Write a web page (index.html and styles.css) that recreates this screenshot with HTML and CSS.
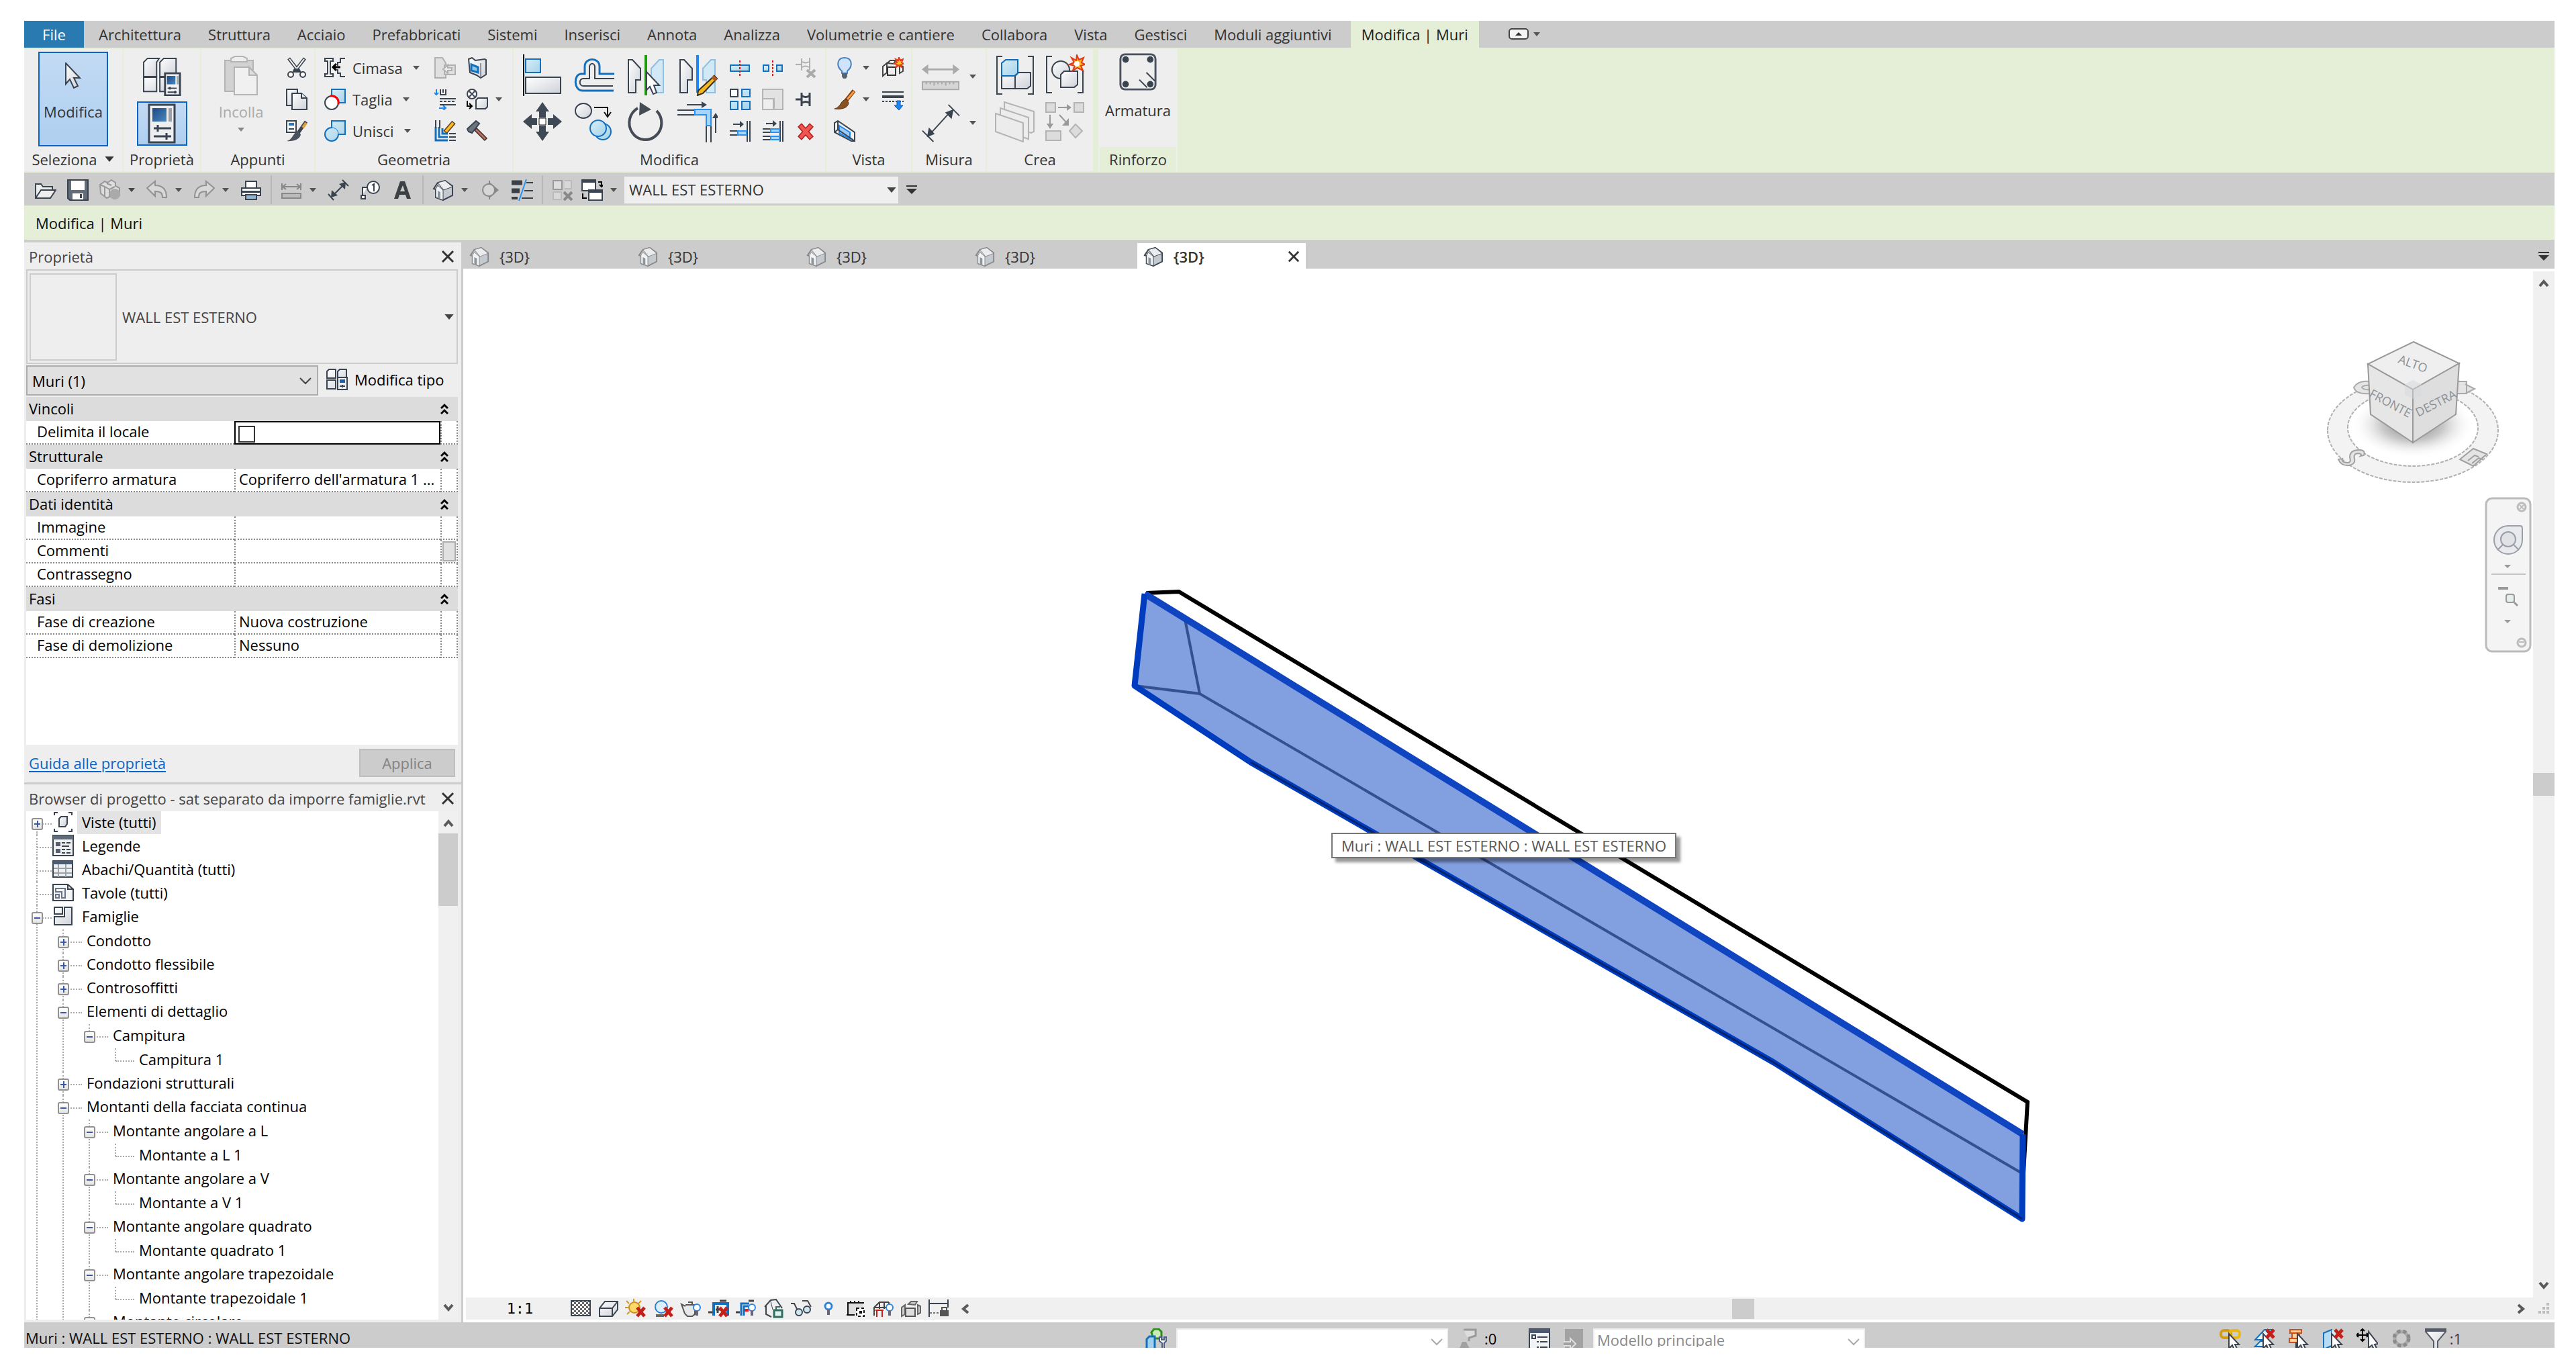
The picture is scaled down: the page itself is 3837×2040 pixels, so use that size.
FILE: index.html
```
<!DOCTYPE html>
<html lang="it">
<head>
<meta charset="utf-8">
<title>Modifica | Muri</title>
<link rel="stylesheet" href="styles.css">
</head>
<body>
<svg class="defs" aria-hidden="true">
<defs>
<linearGradient id="metal" x1="0" y1="0" x2="1" y2="1"><stop offset="0" stop-color="#fff"/><stop offset="1" stop-color="#cdd1d8"/></linearGradient>
<linearGradient id="sky" x1="0" y1="0" x2="1" y2="1"><stop offset="0" stop-color="#d8edf7"/><stop offset="1" stop-color="#a5d3ea"/></linearGradient>
<linearGradient id="navy" x1="0" y1="0" x2="1" y2="1"><stop offset="0" stop-color="#1a4a86"/><stop offset="1" stop-color="#4c86bd"/></linearGradient>
<radialGradient id="shade"><stop offset="0" stop-color="#777"/><stop offset=".5" stop-color="#bbb" stop-opacity=".8"/><stop offset="1" stop-color="#fff" stop-opacity="0"/></radialGradient>
</defs>
<symbol id="down" viewBox="0 0 12 8"><path d="M1 1h10L6 7z" fill="currentColor"/></symbol>
<symbol id="overflow" viewBox="0 0 16 16"><path d="M0 1h16v2H0zM0 6h16L8 14z" fill="currentColor"/></symbol>
<symbol id="chev" viewBox="0 0 18 12"><path d="M1 2l8 8 8-8" fill="none" stroke="currentColor" stroke-width="2"/></symbol>
<symbol id="chevb" viewBox="0 0 16 14"><path d="M2 11l6-7 6 7" fill="none" stroke="#5a5a5a" stroke-width="4"/></symbol>
<symbol id="x" viewBox="0 0 20 20"><path d="M2 2l16 16M18 2L2 18" stroke="#333" stroke-width="3"/></symbol>
<symbol id="dblup" viewBox="0 0 12 18"><path d="M1 8l5-5 5 5M1 16l5-5 5 5" fill="none" stroke="#000" stroke-width="3"/></symbol>
<symbol id="cursor" viewBox="0 0 24 40"><path d="M1 1v31l6-7 6 13 6-3-6-12h9z" fill="url(#metal)" stroke="#3a4350" stroke-width="2"/></symbol>
<symbol id="typeprops" viewBox="0 0 60 60"><g fill="url(#metal)" stroke="#3a4350" stroke-width="2"><path d="M2 8l6-6h18l-4 6v22H2z"/><path d="M27 8l6-6h19v24l-4 4H27z"/><path d="M2 31h20v22H2zM27 31h20v22H27z"/></g><path d="M35 25h23v34H35z" fill="#f2f3f5" stroke="#3a4350" stroke-width="3"/><path d="M38 29h13v13H38z" fill="url(#navy)"/><path d="M53 29h3v13h-3z" fill="#9aa"/><path d="M39 48h14M39 54h14" stroke="#3a4350" stroke-width="2"/><path d="M41 46h3v4h-3zM49 52h3v4h-3z" fill="#3a4350"/></symbol>
<symbol id="edittype" viewBox="0 0 32 32"><path d="M1 4l3-3h10v13H1zM17 4l3-3h10v13H17zM1 17h13v13H1z" fill="url(#metal)" stroke="#3a4350" stroke-width="2"/><path d="M17 13h14v18H17z" fill="#f2f3f5" stroke="#3a4350" stroke-width="2"/><path d="M20 16h8v5h-8z" fill="#1c5fae"/><path d="M20 26h8M24 24v4" stroke="#3a4350" stroke-width="2"/></symbol>
<symbol id="props" viewBox="0 0 42 60"><path d="M2 2h38v56H2z" fill="#eceef0" stroke="#3a4350" stroke-width="3"/><path d="M7 7h21v20H7z" fill="url(#navy)"/><path d="M31 7h5v20h-5z" fill="#9ca0a8"/><path d="M9 37h26M9 49h26M15 32v10M28 44v10" stroke="#3a4350" stroke-width="3"/></symbol>
<symbol id="paste" viewBox="0 0 50 60"><g stroke="#b4b4b4" stroke-width="2"><path d="M1 7h42v46H1z" fill="#d2d2d2"/><path d="M10 4l6-3h12l6 3v5H10z" fill="#eee"/><path d="M15 17h22l12 12v29H15z" fill="#f0f0f0"/><path d="M37 17v12h12z" fill="#ddd"/></g></symbol>
<symbol id="cut" viewBox="0 0 32 32"><path d="M4 2l15 19M28 2L13 21" stroke="#3a4350" stroke-width="5"/><path d="M5 3l13 17M27 3L14 20" stroke="#fff" stroke-width="2"/><path d="M12 17h8l3 6H9z" fill="#3a4350"/><circle cx="7" cy="26" r="4" fill="#fff" stroke="#3a4350" stroke-width="2"/><circle cx="25" cy="26" r="4" fill="#fff" stroke="#3a4350" stroke-width="2"/></symbol>
<symbol id="copy" viewBox="0 0 32 32"><g fill="url(#metal)" stroke="#3a4350" stroke-width="2"><path d="M1 1h16v24H1z"/><path d="M9 7h14l8 7v17H9z"/><path d="M23 7v7h8"/></g></symbol>
<symbol id="match" viewBox="0 0 32 32"><path d="M1 1h14v17H1z" fill="#fff" stroke="#3a4350" stroke-width="2"/><path d="M4 4h8v4H4z" fill="#2a78c0"/><path d="M4 13h8" stroke="#3a4350" stroke-width="2"/><path d="M30 2L18 19" stroke="#3a4350" stroke-width="5"/><path d="M30 4L25 11" stroke="#e0a23c" stroke-width="4"/><path d="M19 17c-9 0-8 12-18 14 9 1 20-2 21-10z" fill="#4a525e"/></symbol>
<symbol id="cope" viewBox="0 0 32 32"><path d="M1 2h12v4H9v19h4v4H1v-4h4V6H1z" fill="#fff" stroke="#3a4350" stroke-width="2"/><path d="M31 2h-7v6h-4v5M31 29h-7v-5h-4v-6" fill="none" stroke="#3a4350" stroke-width="2"/><path d="M24 15H13m5-5l-5 5 5 5" fill="none" stroke="#000" stroke-width="3"/></symbol>
<symbol id="cutg" viewBox="0 0 32 32"><path d="M11 1h20v20H20c0-6-4-10-9-10z" fill="url(#sky)" stroke="#1470bd" stroke-width="2"/><circle cx="11" cy="21" r="10" fill="#fff" stroke="#3a4350" stroke-width="2"/><path d="M9 11a10 10 0 0 1 12 12" fill="none" stroke="#f00" stroke-width="3"/></symbol>
<symbol id="join" viewBox="0 0 32 32"><path d="M11 1h20v20H21a10 10 0 1 1-10-10z" fill="url(#sky)" stroke="#1470bd" stroke-width="2"/><path d="M11 11c6 0 10 4 10 10" stroke="#1470bd" fill="none"/></symbol>
<symbol id="splitf" viewBox="0 0 32 32"><g fill="#e0e0e0" stroke="#b0b0b0" stroke-width="2"><path d="M1 1h11l5 8v22H1z"/><path d="M15 12h16v14H15z"/><path d="M26 16h-6v-4l-7 6 7 6v-4h6z" fill="#eee"/></g></symbol>
<symbol id="paint" viewBox="0 0 32 32"><path d="M3 3l5-2 5 4 14-2 2 1v22l-8 5-6-4-10-4z" fill="url(#metal)" stroke="#3a4350" stroke-width="2"/><path d="M21 9v20" stroke="#3a4350"/><path d="M7 11l10 4v8l-10-3z" fill="#8cc4ec" stroke="#1470bd" stroke-width="3"/></symbol>
<symbol id="wallj" viewBox="0 0 32 32"><path d="M3 1v8m-3-3l3 3 3-3M7 29h10m-4-4l4 4-4 3" stroke="#1e86f0" fill="none" stroke-width="2"/><path d="M9 1v8h8V1M13 1v5M8 15h24M8 24h24" fill="none" stroke="#3a4350" stroke-width="2"/><path d="M8 19h24" stroke="#3a4350" stroke-width="2" stroke-dasharray="4 2"/></symbol>
<symbol id="swap" viewBox="0 0 32 32"><circle cx="8" cy="8" r="7" fill="#fff" stroke="#3a4350" stroke-width="2"/><path d="M4 4l8 8M12 4l-8 8" stroke="#3a4350" stroke-width="2"/><path d="M1 18v8h6m-3-4l4 4-4 4" fill="none" stroke="#000" stroke-width="2"/><path d="M14 17l3-3h14v13l-3 3H14z" fill="url(#metal)" stroke="#3a4350" stroke-width="2"/></symbol>
<symbol id="wallpen" viewBox="0 0 32 32"><path d="M2 10v20h18M7 10v15h13M12 12v8h8" stroke="#1470bd" fill="none" stroke-width="3"/><path d="M2 0v12M8 0v12M22 20h10M22 25h10M22 30h10" stroke="#3a4350" stroke-width="2"/><path d="M29 3L16 18" stroke="#5a4020" stroke-width="7"/><path d="M28 4L17 17" stroke="#ffb91e" stroke-width="4"/></symbol>
<symbol id="hammer" viewBox="0 0 32 32"><path d="M12 12l17 17" stroke="#3a2a2a" stroke-width="6"/><path d="M14 14l14 14" stroke="#b9705c" stroke-width="3"/><path d="M14 1l5 4-11 14-5-2-2-4z" fill="#6b7480" stroke="#3a4350" stroke-width="2"/></symbol>
<symbol id="align" viewBox="0 0 60 62"><path d="M2 0v62" stroke="#000" stroke-width="2"/><path d="M5 7h22v20H5z" fill="url(#sky)" stroke="#1470bd" stroke-width="2"/><path d="M5 34h52v24H5z" fill="url(#metal)" stroke="#3a4350" stroke-width="2"/></symbol>
<symbol id="offset" viewBox="0 0 60 62"><path d="M60 29H38V18c0-14-22-14-22 0v11h-5c-12 0-12 25 2 25h46" fill="none" stroke="#1470bd" stroke-width="3"/><path d="M60 36H31V19c0-7-8-7-8 0v17h-9c-7 0-7 11 0 11h44" fill="none" stroke="#3a4350" stroke-width="2"/></symbol>
<symbol id="mirror" viewBox="0 0 60 62"><path d="M4 8h6l12 13v17h-7v19H4z" fill="url(#metal)" stroke="#3a4350" stroke-width="2"/><path d="M56 8h-6L38 21v17h5v19h13z" fill="#d3e8f5" stroke="#8fbfe3" stroke-width="2"/></symbol>
<symbol id="mirrorp" viewBox="0 0 60 62"><use href="#mirror"/><path d="M30 1v60" stroke="#1d9a0c" stroke-width="4"/><path d="M31 26v27l5-5 5 11 5-2-4-11h8z" fill="#fff" stroke="#3a4350" stroke-width="2"/></symbol>
<symbol id="mirrord" viewBox="0 0 60 62"><use href="#mirror"/><path d="M30 1v56" stroke="#1e86f0" stroke-width="4"/><path d="M55 32l4 4-21 22-8 3 1-7z" fill="#f5b71c" stroke="#3a3020" stroke-width="2"/><path d="M52 33l6 5" stroke="#a85820" stroke-width="5"/></symbol>
<symbol id="move" viewBox="0 0 60 62"><path d="M30 2l10 14h-5v9H25v-9h-5zM30 60l10-14h-5v-9H25v9h-5zM1 31l13-11v6h8v10h-8v6zM59 31L46 20v6h-8v10h8v6z" fill="#3f4855"/><path d="M25 26h10v10H25z" fill="#fff" stroke="#222" stroke-width="1"/></symbol>
<symbol id="copyel" viewBox="0 0 60 62"><ellipse cx="14" cy="15" rx="12" ry="11" fill="url(#metal)" stroke="#3a4350" stroke-width="2"/><path d="M30 10h20v12m-5-5l5 7 5-7" fill="none" stroke="#111" stroke-width="2"/><circle cx="43" cy="46" r="12" fill="url(#sky)" stroke="#1470bd" stroke-width="2"/><circle cx="36" cy="41" r="12" fill="url(#sky)" stroke="#1470bd" stroke-width="2"/></symbol>
<symbol id="rotate" viewBox="0 0 60 62"><path d="M46 15a24 25 0 1 1-28-4" fill="none" stroke="#454c56" stroke-width="4"/><path d="M21 2l17 11-18 9z" fill="#454c56"/></symbol>
<symbol id="trim" viewBox="0 0 60 62"><path d="M14 6h24M57 48V24" stroke="#3a4350" stroke-width="2"/><path d="M36 1l8 5-8 5zM52 26l5-8 5 8z" fill="#3a4350"/><path d="M0 14h26M0 21h26M43 37v25M50 37v25" stroke="#3a4350" stroke-width="2"/><path d="M26 13h24v24h-7V21H26z" fill="#a9d4f5" stroke="#2a91f2" stroke-width="2"/></symbol>
<symbol id="split" viewBox="0 0 32 32"><path d="M2 12h28v9H2z" fill="url(#sky)" stroke="#1470bd" stroke-width="2"/><path d="M16 5v23" stroke="#d21515" stroke-width="2" stroke-dasharray="3 2"/></symbol>
<symbol id="splitgap" viewBox="0 0 32 32"><path d="M2 12h8v9H2zM22 12h8v9h-8z" fill="url(#sky)" stroke="#1470bd" stroke-width="2"/><path d="M16 5v23" stroke="#d21515" stroke-width="2" stroke-dasharray="3 2"/></symbol>
<symbol id="pin" viewBox="0 0 32 32"><path d="M1 16h8M10 6v20M11 11q5 3 10 0M11 21q5-3 10 0M22 6v20" fill="none" stroke="currentColor" stroke-width="3"/></symbol>
<symbol id="unpin" viewBox="0 0 32 32"><path d="M1 11h8M10 2v18M11 7q5 3 10 0M11 15q5-3 10 0M22 1v18" fill="none" stroke="#b0b0b0" stroke-width="2"/><path d="M18 19l12 11M30 19L18 30" stroke="#aaa" stroke-width="4"/></symbol>
<symbol id="array" viewBox="0 0 32 32"><path d="M2 1h11v11H2z" fill="#fff" stroke="#3a4350" stroke-width="2"/><path d="M19 1h12v11H19zM2 19h11v12H2zM19 19h12v12H19z" fill="url(#sky)" stroke="#1470bd" stroke-width="2"/></symbol>
<symbol id="scale" viewBox="0 0 32 32"><path d="M1 1h30v30H18V15H1z" fill="#e2e2e2" stroke="#b5b5b5" stroke-width="2"/><path d="M1 15h16v16H1z" fill="#eee" stroke="#b5b5b5" stroke-width="2"/></symbol>
<symbol id="trims" viewBox="0 0 32 32"><path d="M6 6h12M1 16h12M1 22h12M27 1v31M31 1v31" stroke="#3a4350" stroke-width="2"/><path d="M16 1l6 5-6 5z" fill="#3a4350"/><path d="M13 16h13v6H13z" fill="#a9d4f5" stroke="#2a91f2" stroke-width="2"/></symbol>
<symbol id="trimm" viewBox="0 0 32 32"><path d="M6 5h12M1 13h12M1 18h12M1 24h12M1 29h12M27 1v31M31 1v31" stroke="#3a4350" stroke-width="2"/><path d="M16 0l6 5-6 5z" fill="#3a4350"/><path d="M13 13h13v5H13zM13 24h13v5H13z" fill="#a9d4f5" stroke="#2a91f2" stroke-width="2"/></symbol>
<symbol id="del" viewBox="0 0 32 32"><path d="M7 7l18 20M25 7L7 27" stroke="#b01c1c" stroke-width="8"/><path d="M8 8l16 18M24 8L8 26" stroke="#f0554f" stroke-width="5"/></symbol>
<symbol id="bulb" viewBox="0 0 32 32"><path d="M12 21C2 12 6 1 16 1s14 11 4 20v3h-8z" fill="#cfe4fb" stroke="#4a7fc0" stroke-width="2"/><path d="M12 24h8v5l-2 3h-4l-2-3z" fill="#5a6470"/></symbol>
<symbol id="dispbox" viewBox="0 0 32 32"><path d="M1 14l6-5v14l-6 5zM31 14l-5-3v13l5-3zM8 9l4-4h8l-3 5z" fill="#fff" stroke="#444" stroke-width="2"/><path d="M8 15h12v12H8z" fill="#eee" stroke="#333" stroke-width="2"/><path d="M25 0l2 5 4-2-2 5 3 2-4 1 1 4-4-3-4 3 1-4-4-1 4-2-2-5 4 2z" fill="#ffc21c" stroke="#e0401a" stroke-width="2"/></symbol>
<symbol id="brush" viewBox="0 0 32 32"><path d="M30 3L18 18" stroke="#7a3c10" stroke-width="6"/><path d="M30 4L20 16" stroke="#ff9a3c" stroke-width="3"/><path d="M19 16c-9 0-8 12-18 14 9 1 20 0 21-9z" fill="#8a5220" stroke="#5a3210"/></symbol>
<symbol id="lwt" viewBox="0 0 32 32"><path d="M0 5h32" stroke="#3a4350" stroke-width="2"/><path d="M0 12h32" stroke="#3a4350" stroke-width="4"/><path d="M0 19h32" stroke="#3a4350" stroke-width="2" stroke-dasharray="3 2"/><path d="M22 18h5v7h4l-6 7-7-7h4z" fill="#1e86f0" stroke="#0a5ab4"/></symbol>
<symbol id="selbox" viewBox="0 0 32 32"><path d="M1 4l5-3 25 17v13h-5L1 18z" fill="#f2f2f2" stroke="#3a4350" stroke-width="2"/><path d="M8 8l16 10v10L8 19z" fill="#9ccbfa" stroke="#1e86f0" stroke-width="2"/><path d="M1 18l5-4 25 17M6 1v13" fill="none" stroke="#3a4350" stroke-width="2"/></symbol>
<symbol id="ruler" viewBox="0 0 60 44"><path d="M8 11h44" stroke="#aaa" stroke-width="3"/><path d="M1 11l10-8v16zM59 11L49 3v16z" fill="#aaa"/><path d="M2 30h56v12H2z" fill="#d6d6d6" stroke="#aaa" stroke-width="2"/><path d="M8 30v4m6-4v4m6-4v6m6-6v4m6-4v4m6-4v6m6-6v4m6-4v4" stroke="#aaa" stroke-width="2"/></symbol>
<symbol id="dim" viewBox="0 0 60 60"><path d="M15 46L44 14M2 42l17 17M42 2l17 17" stroke="#3a4350" stroke-width="2"/><path d="M9 52l3-15 9 10zM50 9l-3 15-10-10z" fill="#3a4350"/></symbol>
<symbol id="assembly" viewBox="0 0 60 60"><path d="M11 2H3v56h8M49 2h8v56h-8" fill="none" stroke="#3a4350" stroke-width="2"/><path d="M10 31h20v19H10zM30 31l5-5h18v20l-5 4H30z" fill="url(#metal)" stroke="#3a4350" stroke-width="2"/><path d="M10 12l6-5h18v20l-5 4H10z" fill="url(#sky)" stroke="#0a6ac0" stroke-width="2"/></symbol>
<symbol id="group" viewBox="0 0 60 60"><path d="M11 2H3v54h8M57 22v34h-8" fill="none" stroke="#3a4350" stroke-width="2"/><circle cx="24" cy="22" r="13" fill="url(#metal)" stroke="#3a4350" stroke-width="2"/><path d="M24 29l5-5h20v20l-5 4H24z" fill="url(#metal)" stroke="#3a4350" stroke-width="2"/><path d="M48 0l3 7 7-3-3 7 5 3-6 2 3 7-8-4-7 4 3-7-8-2 7-3-4-7 7 4z" fill="#ffb21c" stroke="#e2381a" stroke-width="2"/><circle cx="48" cy="13" r="4" fill="#fff"/></symbol>
<symbol id="parts" viewBox="0 0 60 60"><g fill="#ececec" stroke="#b4b4b4" stroke-width="2"><path d="M14 1l44 14v30l-4 2-40-14z"/><path d="M8 10l42 14v32L8 42z"/><path d="M1 18l41 14v28L1 45z"/></g></symbol>
<symbol id="partsx" viewBox="0 0 60 60"><g fill="#dcdcdc" stroke="#b4b4b4" stroke-width="2"><path d="M2 2h14v14H2zM44 2h14v14H44zM2 44h22v14H2zM46 34l10 10-10 10-9-10z"/></g><path d="M20 9h14M8 20v14M22 20l10 11" stroke="#999" stroke-width="2"/><path d="M33 4l7 5-7 5zM3 33h10l-5 8zM36 25v11H26z" fill="#999"/></symbol>
<symbol id="rebar" viewBox="0 0 60 60"><rect x="3" y="3" width="54" height="54" rx="7" fill="none" stroke="#4a525e" stroke-width="3"/><circle cx="11" cy="11" r="5" fill="#3a4350"/><circle cx="49" cy="11" r="5" fill="#3a4350"/><circle cx="11" cy="49" r="5" fill="#3a4350"/><circle cx="49" cy="49" r="5" fill="#3a4350"/><path d="M43 31l13 13M32 42l12 12" stroke="#3a4350" stroke-width="2"/></symbol>
<symbol id="open" viewBox="0 0 32 32"><path d="M1 28V7h8l3 4h14v5M1 28l8-12h22l-8 12z" fill="#eee" stroke="#3a4350" stroke-width="2"/></symbol>
<symbol id="save" viewBox="0 0 32 32"><path d="M1 1h30v30H4l-3-3z" fill="#626b78" stroke="#3a4350" stroke-width="2"/><path d="M6 2h20v14H6z" fill="#fff"/><path d="M8 21h16v9H8z" fill="#fff"/><path d="M19 22h3v6h-3z" fill="#3a4350"/></symbol>
<symbol id="sync" viewBox="0 0 32 32"><path d="M1 8l7-5 4 2 6-4 6 4v5l6 3v11l-8 5-5-4-6 3-9-7z" fill="#ddd" stroke="#999" stroke-width="2"/><path d="M8 11l7 4v12M15 15l8-4M1 8l7 3v14M11 6l7 3" stroke="#999" fill="none" stroke-width="2"/><circle cx="23" cy="22" r="8" fill="#aaa"/></symbol>
<symbol id="undo" viewBox="0 0 32 32"><path d="M1 13L13 3v6c12 0 17 6 17 18h-6c0-7-3-9-11-9v7z" fill="#d8d8d8" stroke="#929292" stroke-width="2"/></symbol>
<symbol id="redo" viewBox="0 0 32 32"><path d="M31 13L19 3v6C7 9 2 15 2 27h6c0-7 3-9 11-9v7z" fill="#d8d8d8" stroke="#929292" stroke-width="2"/></symbol>
<symbol id="print" viewBox="0 0 32 32"><path d="M8 3h16v11H8z" fill="#fff" stroke="#3a4350" stroke-width="2"/><path d="M2 13h28v11H2z" fill="#fff" stroke="#3a4350" stroke-width="2"/><path d="M1 17h30v3H1z" fill="#3a4350"/><path d="M8 23h16v7H8z" fill="#8fb8d6" stroke="#3a4350" stroke-width="2"/></symbol>
<symbol id="meas" viewBox="0 0 32 32"><path d="M3 11h26M2 6v10M30 6v10M8 7l-5 4 5 4M24 7l5 4-5 4" fill="none" stroke="#888" stroke-width="2"/><path d="M2 21h28v7H2z" fill="#bbb" stroke="#888" stroke-width="2"/></symbol>
<symbol id="adim" viewBox="0 0 32 32"><path d="M8 24L24 8M1 22l8 9M22 1l9 9" stroke="#3a4350" stroke-width="2"/><path d="M5 27l1-11 9 8zM27 4l-1 11-9-8z" fill="#3a4350"/></symbol>
<symbol id="tag" viewBox="0 0 32 32"><circle cx="20" cy="12" r="9" fill="#fff" stroke="#3a4350" stroke-width="2"/><path d="M18 9l3-2v11" fill="none" stroke="#3a4350" stroke-width="2"/><path d="M11 12H4v11M2 24h6v5H2z" fill="#fff" stroke="#3a4350" stroke-width="2"/></symbol>
<symbol id="atext" viewBox="0 0 32 32"><path d="M3 29L12 3h7l9 26h-6l-2-6H11l-2 6zM12 18h7l-3-9z" fill="#3c3f44"/></symbol>
<symbol id="house" viewBox="0 0 32 32"><path d="M2 14L8 5l11-3 11 8v14l-14 7-11-4V15z" fill="#c4c9d0" stroke="currentColor" stroke-width="2"/><path d="M8 5l11-3 11 9-13 5z" fill="#ececee" stroke="currentColor" stroke-width="1"/><path d="M5 14l3-5 8 7v15l-11-4z" fill="#f2f3f4" stroke="currentColor" stroke-width="1"/><path d="M8 17l4 2v10l-4-1z" fill="#8c949e"/></symbol>
<symbol id="section" viewBox="0 0 32 32"><path d="M15 2v28" stroke="#888" stroke-width="2"/><path d="M15 4l14 12-14 12z" fill="#888"/><circle cx="14" cy="16" r="9" fill="#d6d6d6" stroke="#888" stroke-width="2"/></symbol>
<symbol id="thin" viewBox="0 0 32 32"><path d="M0 5h16M0 17h12" stroke="#3a3f46" stroke-width="7"/><path d="M0 28h9" stroke="#3a3f46" stroke-width="4"/><path d="M22 5h10M19 17h13M15 28h17" stroke="#3a3f46" stroke-width="2"/><path d="M22 0L11 32" stroke="#2a91f2" stroke-width="2"/></symbol>
<symbol id="closeh" viewBox="0 0 32 32"><path d="M2 2h13v13H2z" fill="#ddd" stroke="#999" stroke-width="2"/><path d="M19 2h10v12H19M2 19h12v11H2z" fill="#d8d8d8" stroke="#bbb" stroke-width="2"/><path d="M18 19l12 12M30 19L18 31" stroke="#888" stroke-width="4"/></symbol>
<symbol id="switch" viewBox="0 0 32 32"><path d="M1 1h20v16H1zM11 16h20v15H11z" fill="#fff" stroke="#3a4350" stroke-width="2"/><path d="M1 1h20v4H1zM11 16h20v4H11z" fill="#3a4350"/><path d="M25 4h5v6m-3-2l3 3 3-3M2 21v7h6" fill="none" stroke="#000" stroke-width="2"/></symbol>
<symbol id="viewic" viewBox="0 0 32 32"><path d="M3 6V2h5M24 2h5v4M3 26v4h5M24 30h5v-4" fill="none" stroke="#3a4350" stroke-width="2"/><path d="M10 11l3-3h9v11l-3 4h-9z" fill="url(#metal)" stroke="#3a4350" stroke-width="2"/></symbol>
<symbol id="legend" viewBox="0 0 32 32"><path d="M1 1h30v30H1z" fill="#eef0f2" stroke="#3a4350" stroke-width="2"/><path d="M1 1h30v6H1z" fill="#5f6a7a"/><path d="M5 11h7v6H5zM5 21h7v6H5z" fill="#56606e"/><path d="M14 12h5m2 0h6M14 17h11M14 22h5m2 0h6M14 27h5m2 0h6" stroke="#3a4350" stroke-width="2"/></symbol>
<symbol id="sched" viewBox="0 0 32 32"><path d="M1 4h29v24H1z" fill="#eef0f2" stroke="#3a4350" stroke-width="2"/><path d="M1 4h29v5H1z" fill="#4b5a70"/><path d="M2 15h27M2 22h27M9 9v19M20 9v19" stroke="#9aa2ac" stroke-width="2"/></symbol>
<symbol id="sheet" viewBox="0 0 32 32"><path d="M1 4h22l8 7v17H1z" fill="#f4f5f7" stroke="#3a4350" stroke-width="2"/><path d="M23 4v7h8" fill="none" stroke="#3a4350" stroke-width="2"/><path d="M5 10h14v14h-5V15H5zM5 19h5v5H5z" fill="none" stroke="#687586" stroke-width="2"/></symbol>
<symbol id="fam" viewBox="0 0 32 32"><path d="M3 3h12v10H3zM18 3h11v26H3V17h15z" fill="url(#metal)" stroke="#3a4350" stroke-width="2"/></symbol>
<symbol id="v-checker" viewBox="0 0 32 32"><pattern id="chk" width="6" height="6" patternUnits="userSpaceOnUse"><path d="M0 0h3v3H0zM3 3h3v3H3z" fill="#666"/></pattern><path d="M2 4h28v22H2z" fill="#fff"/><path d="M2 4h28v22H2z" fill="url(#chk)" stroke="#3a4350" stroke-width="2"/></symbol>
<symbol id="v-cube" viewBox="0 0 32 32"><path d="M3 15l8-10h19v12l-8 10H3zM3 15h19v12M22 15l8-10" fill="url(#metal)" stroke="#3a4350" stroke-width="2"/></symbol>
<symbol id="v-redx" viewBox="0 0 32 32"><path d="M18 14l11 13M29 14L18 27" stroke="#c4201a" stroke-width="5"/></symbol>
<symbol id="v-bulb" viewBox="0 0 32 32"><circle cx="25" cy="14" r="5" fill="#fff" stroke="#2a85e0" stroke-width="2"/><path d="M23 19h4v7h-4z" fill="#667"/></symbol>
<symbol id="v-sun" viewBox="0 0 32 32"><path d="M13 1v4M2 4l4 4M24 4l-4 4M0 14h5M3 24l4-4" stroke="#d69a1e" stroke-width="2"/><circle cx="14" cy="14" r="8" fill="#ffd86a" stroke="#c8901a" stroke-width="2"/><use href="#v-redx"/></symbol>
<symbol id="v-shadow" viewBox="0 0 32 32"><path d="M5 24h12v4H5z" fill="#666"/><circle cx="13" cy="13" r="9" fill="#dcefff" stroke="#2a7fd0" stroke-width="2"/><use href="#v-redx"/></symbol>
<symbol id="v-pot" viewBox="0 0 32 32"><path d="M8 10h14v14l-4 3h-7l-4-4-5-14 6 3M12 6h6v4" fill="#e6e8ea" stroke="#555" stroke-width="2"/><use href="#v-bulb"/></symbol>
<symbol id="v-crop" viewBox="0 0 32 32"><path d="M9 26V8h21v18" fill="none" stroke="#1470bd" stroke-width="4"/><path d="M1 21h6M18 4h10M15 12v10M12 17h8" stroke="#444" stroke-width="3"/></symbol>
<symbol id="v-cropx" viewBox="0 0 32 32"><use href="#v-crop"/><use href="#v-redx"/></symbol>
<symbol id="v-cropb" viewBox="0 0 32 32"><path d="M9 26V8h12M13 26V12h7" fill="none" stroke="#1470bd" stroke-width="3"/><path d="M1 21h6M20 4h8" stroke="#444" stroke-width="3"/><path d="M14 18h6" stroke="#e02020" stroke-width="4"/><use href="#v-bulb"/></symbol>
<symbol id="v-lock" viewBox="0 0 32 32"><path d="M3 13L12 3l8-1 9 13M5 12v12l8 4" fill="#eee" stroke="#3a4350" stroke-width="2"/><path d="M12 5l3 12" stroke="#3a4350"/><path d="M17 18h12v10H17z" fill="#dff0ea" stroke="#2f6f62" stroke-width="3"/><path d="M20 18v-5h6" fill="none" stroke="#2f6f62" stroke-width="2"/></symbol>
<symbol id="v-glass" viewBox="0 0 32 32"><path d="M1 8h5l5 10M18 4h8l5 9" fill="none" stroke="#444" stroke-width="2"/><circle cx="13" cy="21" r="5" fill="#cfe8f0" stroke="#3a4350" stroke-width="2"/><circle cx="25" cy="17" r="5" fill="#cfe8f0" stroke="#3a4350" stroke-width="2"/></symbol>
<symbol id="v-bulb1" viewBox="0 0 32 32"><circle cx="16" cy="12" r="5" fill="#fff" stroke="#2a85e0" stroke-width="3"/><path d="M14 17h4v8h-4z" fill="#667"/></symbol>
<symbol id="v-temp" viewBox="0 0 32 32"><path d="M4 8h22v17H4z" fill="#ddd"/><path d="M3 7h25M4 7v19M2 25h12M8 4v4m6-4v4m6-4v4" stroke="#111" stroke-width="2"/><path d="M17 15h11v12H17z" fill="#fff" stroke="#111" stroke-width="2" stroke-dasharray="4 3"/><path d="M21 19h4v4h-4z" fill="#111"/></symbol>
<symbol id="v-anal" viewBox="0 0 32 32"><path d="M2 26V14l8-8h14M10 6v10M17 6v10M2 14h18M24 6v8" fill="none" stroke="#444" stroke-width="2"/><path d="M4 18h12M6 18v10M14 18v10" stroke="#c4201a" stroke-width="2" fill="none"/><use href="#v-bulb"/></symbol>
<symbol id="v-disp" viewBox="0 0 32 32"><path d="M2 14l5-4v14l-5 3zM30 12l-4-2v14l4-2zM12 9l4-4h9l-3 5z" fill="#ccc" stroke="#666" stroke-width="2"/><path d="M8 15h14v12H8z" fill="#ddd" stroke="#555" stroke-width="2"/></symbol>
<symbol id="v-cons" viewBox="0 0 32 32"><path d="M2 2v26M30 2v12M2 8h28" stroke="#3a4350" stroke-width="2"/><path d="M3 22h14" stroke="#777" stroke-width="2" stroke-dasharray="3 2"/><path d="M18 18h13v9H18z" fill="#555"/><path d="M21 18v-4h7v4" fill="none" stroke="#555" stroke-width="2"/></symbol>
<symbol id="s-work" viewBox="0 0 32 32"><path d="M9 6l4-5h7l4 4v10H12z" fill="#c9ebb5" stroke="#2f8a1e" stroke-width="3"/><path d="M2 32V16l4-4h8v20z" fill="#9fd0ee" stroke="#1470bd" stroke-width="3"/><path d="M25 32V22l-4-3v-6h3v4h4v-4h3v6l-3 3v10z" fill="#fff" stroke="#4b5f85" stroke-width="2"/></symbol>
<symbol id="s-filt" viewBox="0 0 32 32"><path d="M9 2h18v9l-10 3v5" fill="#ddd" stroke="#9a9a9a" stroke-width="3"/><path d="M2 32l5-12h6l6 12z" fill="#a2a2a2"/></symbol>
<symbol id="s-opt" viewBox="0 0 32 32"><path d="M1 1h30v34H1z" fill="#f2f3f5" stroke="#3a4350" stroke-width="2"/><path d="M1 1h30v6H1z" fill="#4b5a70"/><path d="M5 10h5v5H5zM13 13h15M12 20h3m2 0h11M12 28h3m2 0h11" fill="none" stroke="#3a4350" stroke-width="2"/></symbol>
<symbol id="s-add" viewBox="0 0 32 32"><path d="M4 1h27v31H4z" fill="#a2a2a2"/><path d="M2 20h10v-5l8 8-8 8v-5H2" fill="#a2a2a2" stroke="#e0e0e0" stroke-width="2"/></symbol>
<symbol id="s-cur" viewBox="0 0 32 32"><path d="M14 8v22l5-5 4 9 4-2-4-8h6z" fill="#fff" stroke="#3a4350" stroke-width="2"/></symbol>
<symbol id="s-redx" viewBox="0 0 32 32"><path d="M19 2l11 12M30 2L19 14" stroke="#c4201a" stroke-width="5"/></symbol>
<symbol id="s-link" viewBox="0 0 32 32"><rect x="2" y="3" width="15" height="11" rx="5" fill="none" stroke="#d49c10" stroke-width="4"/><rect x="15" y="3" width="15" height="11" rx="5" fill="none" stroke="#e8b818" stroke-width="4"/><use href="#s-cur"/></symbol>
<symbol id="s-under" viewBox="0 0 32 32"><path d="M2 17L16 2h12L18 17zM2 27l8-8h14v8z" fill="#e4f3fb" stroke="#1470bd" stroke-width="2"/><use href="#s-cur"/><use href="#s-redx"/></symbol>
<symbol id="s-pin" viewBox="0 0 32 32"><path d="M3 2h17v5H3zM6 7h11v8H6zM2 15h19v6H2z" fill="#ffd0a0" stroke="#c8501a" stroke-width="2"/><path d="M12 21v11" stroke="#3a4350" stroke-width="2"/><use href="#s-cur"/></symbol>
<symbol id="s-face" viewBox="0 0 32 32"><path d="M2 7l12-5v24L2 31z" fill="#b5dcf2" stroke="#1470bd" stroke-width="2"/><path d="M14 3h6v10h-6z" fill="#d6ecf8"/><use href="#s-cur"/><use href="#s-redx"/></symbol>
<symbol id="s-drag" viewBox="0 0 32 32"><path d="M9 1v18M0 10h18M6 4l3-3 3 3M6 16l3 3 3-3M3 7l-3 3 3 3M15 7l3 3-3 3" fill="none" stroke="#000" stroke-width="2"/><path d="M18 5v24l5-4 4 8 4-2-4-7 5-1z" fill="#fff" stroke="#3a4350" stroke-width="2"/></symbol>
<symbol id="s-spin" viewBox="0 0 32 32"><circle cx="16" cy="15" r="10" fill="none" stroke="#aaa" stroke-width="5"/><circle cx="16" cy="15" r="11" fill="none" stroke="#8a8a8a" stroke-width="5" stroke-dasharray="5 4"/></symbol>
<symbol id="s-funnel" viewBox="0 0 32 32"><path d="M1 1h30v4L19 19v14h-6V19L1 5z" fill="url(#metal)" stroke="#555c66" stroke-width="2"/><path d="M2 2h28v3H2z" fill="#555c66"/></symbol>
</svg>

<div class="app">
  <nav class="menu" aria-label="Schede">
    <button class="file">File</button>
    <button>Architettura</button><button>Struttura</button><button>Acciaio</button><button>Prefabbricati</button><button>Sistemi</button><button>Inserisci</button><button>Annota</button><button>Analizza</button><button>Volumetrie e cantiere</button><button>Collabora</button><button>Vista</button><button>Gestisci</button><button>Moduli aggiuntivi</button><button class="current">Modifica | Muri</button>
    <button class="ribbon-toggle" aria-label="Riduci barra"><svg width="30" height="18" viewBox="0 0 30 18"><rect x="1" y="1" width="28" height="15" rx="4" fill="#f4f4f4" stroke="#444" stroke-width="2"/><path d="M10 11h10l-5-5z" fill="#333"/></svg><svg class="caret"><use href="#down"/></svg></button>
  </nav>

  <div class="ribbon">
    <section class="panel p-sel"><div class="body"><button class="big on"><svg width="24" height="40"><use href="#cursor"/></svg>Modifica</button></div><h2>Seleziona <svg class="tri"><use href="#down"/></svg></h2></section>
    <section class="panel p-prop"><div class="body"><button aria-label="Proprietà tipo"><svg width="58" height="58"><use href="#typeprops"/></svg></button><button class="on" aria-label="Proprietà"><svg width="42" height="60"><use href="#props"/></svg></button></div><h2>Proprietà</h2></section>
    <section class="panel p-clip"><div class="body"><button class="big off"><svg width="50" height="60"><use href="#paste"/></svg>Incolla<svg class="caret"><use href="#down"/></svg></button>
      <div class="col"><button aria-label="Taglia"><svg class="i"><use href="#cut"/></svg></button><button aria-label="Copia"><svg class="i"><use href="#copy"/></svg></button><button aria-label="Corrispondenza"><svg class="i"><use href="#match"/></svg></button></div></div><h2>Appunti</h2></section>
    <section class="panel p-geo"><div class="body">
      <div class="col wide"><button><svg class="i"><use href="#cope"/></svg>Cimasa<svg class="caret"><use href="#down"/></svg></button><button><svg class="i"><use href="#cutg"/></svg>Taglia<svg class="caret"><use href="#down"/></svg></button><button><svg class="i"><use href="#join"/></svg>Unisci<svg class="caret"><use href="#down"/></svg></button></div>
      <div class="col"><button aria-label="Dividi"><svg class="i"><use href="#splitf"/></svg></button><button aria-label="Unioni"><svg class="i"><use href="#wallj"/></svg></button><button aria-label="Profilo"><svg class="i"><use href="#wallpen"/></svg></button></div>
      <div class="col arrows"><button aria-label="Dipingi"><svg class="i"><use href="#paint"/></svg></button><button aria-label="Scambia"><svg class="i"><use href="#swap"/></svg><svg class="caret"><use href="#down"/></svg></button><button aria-label="Demolisci"><svg class="i"><use href="#hammer"/></svg></button></div>
    </div><h2>Geometria</h2></section>
    <section class="panel p-mod"><div class="body">
      <div class="large"><button aria-label="Allinea"><svg class="l"><use href="#align"/></svg></button><button aria-label="Offset"><svg class="l"><use href="#offset"/></svg></button><button aria-label="Specchia asse"><svg class="l"><use href="#mirrorp"/></svg></button><button aria-label="Specchia disegna"><svg class="l"><use href="#mirrord"/></svg></button><button aria-label="Sposta"><svg class="l"><use href="#move"/></svg></button><button aria-label="Copia elemento"><svg class="l"><use href="#copyel"/></svg></button><button aria-label="Ruota"><svg class="l"><use href="#rotate"/></svg></button><button aria-label="Estendi"><svg class="l"><use href="#trim"/></svg></button></div>
      <div class="col"><button aria-label="Dividi elemento"><svg class="i"><use href="#split"/></svg></button><button aria-label="Serie"><svg class="i"><use href="#array"/></svg></button><button aria-label="Taglia singolo"><svg class="i"><use href="#trims"/></svg></button></div>
      <div class="col"><button aria-label="Dividi con spazio"><svg class="i"><use href="#splitgap"/></svg></button><button aria-label="Scala"><svg class="i"><use href="#scale"/></svg></button><button aria-label="Taglia multiplo"><svg class="i"><use href="#trimm"/></svg></button></div>
      <div class="col"><button aria-label="Sblocca"><svg class="i"><use href="#unpin"/></svg></button><button aria-label="Blocca"><svg class="i"><use href="#pin"/></svg></button><button aria-label="Elimina"><svg class="i"><use href="#del"/></svg></button></div>
    </div><h2>Modifica</h2></section>
    <section class="panel p-view"><div class="body">
      <div class="col arrows"><button aria-label="Nascondi"><svg class="i"><use href="#bulb"/></svg><svg class="caret"><use href="#down"/></svg></button><button aria-label="Sostituisci grafica"><svg class="i"><use href="#brush"/></svg><svg class="caret"><use href="#down"/></svg></button><button aria-label="Casella di selezione"><svg class="i"><use href="#selbox"/></svg></button></div>
      <div class="col"><button aria-label="Sposta elementi"><svg class="i"><use href="#dispbox"/></svg></button><button aria-label="Spessore linea"><svg class="i"><use href="#lwt"/></svg></button></div>
    </div><h2>Vista</h2></section>
    <section class="panel p-meas"><div class="body"><button class="off" aria-label="Misura"><svg width="58" height="44"><use href="#ruler"/></svg><svg class="caret"><use href="#down"/></svg></button><button aria-label="Quota"><svg width="58" height="60"><use href="#dim"/></svg><svg class="caret"><use href="#down"/></svg></button></div><h2>Misura</h2></section>
    <section class="panel p-crea"><div class="body"><button aria-label="Assieme"><svg class="l"><use href="#assembly"/></svg></button><button aria-label="Gruppo"><svg class="l"><use href="#group"/></svg></button><button aria-label="Parti"><svg class="l"><use href="#parts"/></svg></button><button aria-label="Simile"><svg class="l"><use href="#partsx"/></svg></button></div><h2>Crea</h2></section>
    <section class="panel p-reb"><div class="body"><button class="big"><svg width="58" height="60"><use href="#rebar"/></svg>Armatura</button></div><h2>Rinforzo</h2></section>
  </div>

  <div class="qat">
    <button aria-label="Apri"><svg class="i"><use href="#open"/></svg></button>
    <button aria-label="Salva"><svg class="i"><use href="#save"/></svg></button>
    <button class="off" aria-label="Sincronizza"><svg class="i"><use href="#sync"/></svg><svg class="caret dark"><use href="#down"/></svg></button>
    <button class="off" aria-label="Annulla"><svg class="i"><use href="#undo"/></svg><svg class="caret"><use href="#down"/></svg></button>
    <button class="off" aria-label="Ripeti"><svg class="i"><use href="#redo"/></svg><svg class="caret"><use href="#down"/></svg></button>
    <button aria-label="Stampa"><svg class="i"><use href="#print"/></svg></button>
    <i class="sep"></i>
    <button aria-label="Misura"><svg class="i"><use href="#meas"/></svg><svg class="caret"><use href="#down"/></svg></button>
    <button aria-label="Quota allineata"><svg class="i"><use href="#adim"/></svg></button>
    <button aria-label="Etichetta"><svg class="i"><use href="#tag"/></svg></button>
    <button aria-label="Testo"><svg class="i"><use href="#atext"/></svg></button>
    <i class="sep"></i>
    <button aria-label="Vista 3D"><svg class="i"><use href="#house"/></svg><svg class="caret"><use href="#down"/></svg></button>
    <button aria-label="Sezione"><svg class="i"><use href="#section"/></svg></button>
    <button aria-label="Linee sottili"><svg class="i"><use href="#thin"/></svg></button>
    <i class="sep"></i>
    <button aria-label="Chiudi nascoste"><svg class="i"><use href="#closeh"/></svg></button>
    <button class="near" aria-label="Cambia finestra"><svg class="i"><use href="#switch"/></svg><svg class="caret"><use href="#down"/></svg></button>
    <label class="combo quick"><select aria-label="Tipo rapido"><option>WALL EST ESTERNO</option></select><svg width="16" height="12"><use href="#down"/></svg></label>
    <button class="near" aria-label="Personalizza"><svg width="16" height="16"><use href="#overflow"/></svg></button>
  </div>

  <div class="options">Modifica | Muri</div>

  <main class="work">
    <aside class="side">
      <section class="props">
        <header><h3>Proprietà</h3><button aria-label="Chiudi proprietà"><svg width="20" height="20"><use href="#x"/></svg></button></header>
        <button class="type"><span class="thumb"></span>WALL EST ESTERNO<svg width="16" height="12"><use href="#down"/></svg></button>
        <div class="filter"><label class="combo cat"><select aria-label="Categoria"><option>Muri (1)</option></select><svg width="18" height="12"><use href="#chev"/></svg></label><button class="edit"><svg class="i"><use href="#edittype"/></svg>Modifica tipo</button></div>
        <div class="grid">
          <table>
            <colgroup><col class="c-name"><col><col class="c-btn"></colgroup>
            <tbody>
            <tr class="cat-row"><th colspan="2">Vincoli</th><td><svg class="up"><use href="#dblup"/></svg></td></tr>
            <tr><th><label for="room">Delimita il locale</label></th><td class="active"><input type="checkbox" id="room"></td><td></td></tr>
            <tr class="cat-row"><th colspan="2">Strutturale</th><td><svg class="up"><use href="#dblup"/></svg></td></tr>
            <tr><th>Copriferro armatura</th><td>Copriferro dell'armatura 1 ...</td><td></td></tr>
            <tr class="cat-row"><th colspan="2">Dati identità</th><td><svg class="up"><use href="#dblup"/></svg></td></tr>
            <tr><th>Immagine</th><td></td><td></td></tr>
            <tr><th>Commenti</th><td></td><td><button class="assoc" aria-label="Associa"></button></td></tr>
            <tr><th>Contrassegno</th><td></td><td></td></tr>
            <tr class="cat-row"><th colspan="2">Fasi</th><td><svg class="up"><use href="#dblup"/></svg></td></tr>
            <tr><th>Fase di creazione</th><td>Nuova costruzione</td><td></td></tr>
            <tr><th>Fase di demolizione</th><td>Nessuno</td><td></td></tr>
            </tbody>
          </table>
        </div>
        <footer><a href="#guida">Guida alle proprietà</a><button disabled>Applica</button></footer>
      </section>
      <section class="browser">
        <header><h3>Browser di progetto - sat separato da imporre famiglie.rvt</h3><button aria-label="Chiudi browser"><svg width="20" height="20"><use href="#x"/></svg></button></header>
        <div class="treebox">
          <ul class="tree">
            <li><div class="row"><button class="ex plus" aria-label="Espandi"></button><svg class="i"><use href="#viewic"/></svg><span class="sel">Viste (tutti)</span></div></li>
            <li><div class="row"><svg class="i"><use href="#legend"/></svg><span>Legende</span></div></li>
            <li><div class="row"><svg class="i"><use href="#sched"/></svg><span>Abachi/Quantità (tutti)</span></div></li>
            <li><div class="row"><svg class="i"><use href="#sheet"/></svg><span>Tavole (tutti)</span></div></li>
            <li class="more"><div class="row"><button class="ex" aria-label="Comprimi"></button><svg class="i"><use href="#fam"/></svg><span>Famiglie</span></div>
              <ul>
                <li><div class="row"><button class="ex plus" aria-label="Espandi"></button><span>Condotto</span></div></li>
                <li><div class="row"><button class="ex plus" aria-label="Espandi"></button><span>Condotto flessibile</span></div></li>
                <li><div class="row"><button class="ex plus" aria-label="Espandi"></button><span>Controsoffitti</span></div></li>
                <li><div class="row"><button class="ex" aria-label="Comprimi"></button><span>Elementi di dettaglio</span></div>
                  <ul><li><div class="row"><button class="ex" aria-label="Comprimi"></button><span>Campitura</span></div>
                    <ul><li><div class="row"><span>Campitura 1</span></div></li></ul></li></ul></li>
                <li><div class="row"><button class="ex plus" aria-label="Espandi"></button><span>Fondazioni strutturali</span></div></li>
                <li class="more"><div class="row"><button class="ex" aria-label="Comprimi"></button><span>Montanti della facciata continua</span></div>
                  <ul>
                    <li><div class="row"><button class="ex" aria-label="Comprimi"></button><span>Montante angolare a L</span></div><ul><li><div class="row"><span>Montante a L 1</span></div></li></ul></li>
                    <li><div class="row"><button class="ex" aria-label="Comprimi"></button><span>Montante angolare a V</span></div><ul><li><div class="row"><span>Montante a V 1</span></div></li></ul></li>
                    <li><div class="row"><button class="ex" aria-label="Comprimi"></button><span>Montante angolare quadrato</span></div><ul><li><div class="row"><span>Montante quadrato 1</span></div></li></ul></li>
                    <li><div class="row"><button class="ex" aria-label="Comprimi"></button><span>Montante angolare trapezoidale</span></div><ul><li><div class="row"><span>Montante trapezoidale 1</span></div></li></ul></li>
                    <li class="more"><div class="row"><button class="ex" aria-label="Comprimi"></button><span>Montante circolare</span></div></li>
                  </ul></li>
              </ul></li>
          </ul>
          <div class="vbar"><svg width="16" height="14"><use href="#chevb"/></svg><i class="knob"></i><svg class="flip" width="16" height="14"><use href="#chevb"/></svg></div>
        </div>
      </section>
    </aside>

    <section class="viewport">
      <div class="tabs">
        <button><svg class="i"><use href="#house"/></svg>{3D}</button><button><svg class="i"><use href="#house"/></svg>{3D}</button><button><svg class="i"><use href="#house"/></svg>{3D}</button><button><svg class="i"><use href="#house"/></svg>{3D}</button><button class="current"><svg class="i"><use href="#house"/></svg>{3D}<svg class="close" width="18" height="18"><use href="#x"/></svg></button>
        <svg class="tabmenu" width="16" height="16"><use href="#overflow"/></svg>
      </div>
      <div class="stage">
        <div class="canvas">
          <svg class="scene" viewBox="690 404 3083 1528" preserveAspectRatio="xMinYMin meet">
            <path d="M1708 883L1756 881L3020 1641L3013 1764" fill="none" stroke="#000" stroke-width="6"/>
            <path d="M1705 884L3013 1689L3012 1815L2642 1582L1863 1135L1690 1021z" fill="#829fe0"/>
            <path d="M1765 922L1787 1033L3010 1746M1690 1021L1787 1033" fill="none" stroke="#34508f" stroke-width="4"/>
            <path d="M1705 884L3013 1689" fill="none" stroke="#0f45c0" stroke-width="10"/>
            <path d="M3013 1689L3012 1815L2642 1582L1863 1135L1690 1021L1705 884" fill="none" stroke="#003cbe" stroke-width="9" stroke-linejoin="round"/>
            <path d="M3012 1815L2642 1582L1863 1135" fill="none" stroke="#04236e" stroke-width="3"/>
          </svg>
          <svg class="cube" width="258" height="214" viewBox="3465 507 258 214">
            <path d="M3467 641a127 77 0 1 0 254 0a127 77 0 1 0-254 0M3497 637a97 57 0 1 1 194 0a97 57 0 1 1-194 0" fill="#f3f3f3" fill-rule="evenodd" stroke="#b0b0b0" stroke-width="2" stroke-dasharray="5 2"/>
            <ellipse cx="3594" cy="632" rx="92" ry="50" fill="url(#shade)"/>
            <path d="M3530 568q-18-2-24 9q4 11 24 9M3530 574q-10-1-12 3q3 4 12 3M3660 568h14v18h-14M3672 572l14 7-14 7" fill="#e4e4e4" stroke="#aaa" stroke-width="2"/>
            <path d="M3483 684q4 10 16 9q10-2 8-10q-2-8 6-8q6 1 3 4l5-1q3-8-7-8q-14 0-14 11q3 9-5 8q-8-1-6-6zM3664 684l20-16 20 8-20 18zM3676 686l10-8 6 2M3682 690l10-8 6 2" fill="#e4e4e4" stroke="#a0a0a0" stroke-width="2"/>
            <path d="M3595 509L3663 541L3594 580L3527 542z" fill="#efefef" stroke="#999" stroke-width="2"/>
            <path d="M3527 542L3594 580V659L3531 617z" fill="#e6e6e6" stroke="#999" stroke-width="2"/>
            <path d="M3663 541L3594 580V659L3658 617z" fill="#dedede" stroke="#999" stroke-width="2"/>
            <path d="M3582 572l12-6 13 6v16l-13 6-12-6z" fill="#d4d8dc" opacity=".5"/>
            <g class="facetext"><text x="3594" y="548" transform="rotate(20 3594 542)">ALTO</text><text x="3561" y="607" transform="rotate(28 3561 600)">FRONTE</text><text x="3628" y="607" transform="rotate(-27 3628 600)">DESTRA</text></g>
          </svg>
          <div class="navbar"><svg width="70" height="232" viewBox="0 0 70 232"><g fill="none" stroke="#bbb" stroke-width="3"><rect x="2" y="2" width="66" height="228" rx="9" fill="#f4f4f4"/><circle cx="55" cy="15" r="6"/><path d="M52 12l6 6M58 12l-6 6" stroke-width="2"/><circle cx="55" cy="217" r="6"/><path d="M51 216h8" stroke-width="2"/></g><path d="M35 43h18q3 0 3 4v17a21 21 0 1 1-21-21z" fill="#e8eaee" stroke="#9a9ea6" stroke-width="2"/><ellipse cx="35" cy="63" rx="11" ry="11" fill="#e0e2e6" stroke="#9a9ea6" stroke-width="2"/><path d="M27 71l-8 8M43 71l8 8" stroke="#9a9ea6" stroke-width="2"/><path d="M29 101h10l-5 5zM29 183h10l-5 5z" fill="#999"/><path d="M10 115h51" stroke="#c4c4c4" stroke-width="2"/><path d="M20 136h15" stroke="#999" stroke-width="4"/><rect x="32" y="145" width="12" height="12" rx="3" fill="#e6f0ea" stroke="#999" stroke-width="2"/><path d="M44 157l5 5" stroke="#999" stroke-width="3"/></svg></div>
          <div class="tip" role="tooltip">Muri : WALL EST ESTERNO : WALL EST ESTERNO</div>
        </div>
        <div class="vbar wide"><svg width="16" height="14"><use href="#chevb"/></svg><i class="knob"></i><svg class="flip" width="16" height="14"><use href="#chevb"/></svg></div>
      </div>
      <div class="viewctl">
        <button class="scale">1:1</button>
        <div class="ctl"><button aria-label="Dettaglio"><svg class="i"><use href="#v-checker"/></svg></button><button aria-label="Stile"><svg class="i"><use href="#v-cube"/></svg></button><button aria-label="Sole"><svg class="i"><use href="#v-sun"/></svg></button><button aria-label="Ombre"><svg class="i"><use href="#v-shadow"/></svg></button><button aria-label="Rendering"><svg class="i"><use href="#v-pot"/></svg></button><button aria-label="Taglia vista"><svg class="i"><use href="#v-cropx"/></svg></button><button aria-label="Regione"><svg class="i"><use href="#v-cropb"/></svg></button><button aria-label="Blocca vista"><svg class="i"><use href="#v-lock"/></svg></button><button aria-label="Isola"><svg class="i"><use href="#v-glass"/></svg></button><button aria-label="Mostra nascosti"><svg class="i"><use href="#v-bulb1"/></svg></button><button aria-label="Proprietà temporanee"><svg class="i"><use href="#v-temp"/></svg></button><button aria-label="Modello analitico"><svg class="i"><use href="#v-anal"/></svg></button><button aria-label="Spostamento"><svg class="i"><use href="#v-disp"/></svg></button><button aria-label="Vincoli"><svg class="i"><use href="#v-cons"/></svg></button></div>
        <svg class="left" width="16" height="14"><use href="#chevb"/></svg>
        <div class="hbar"><i class="hknob"></i></div>
        <svg class="right" width="16" height="14"><use href="#chevb"/></svg>
        <svg class="grip" width="18" height="18" viewBox="0 0 18 18"><path d="M12 0h4v4h-4zM6 6h4v4H6zM12 6h4v4h-4zM0 12h4v4H0zM6 12h4v4H6zM12 12h4v4h-4z" fill="#bdbdbd"/></svg>
      </div>
    </section>
  </main>

  <footer class="status">
    <span class="msg">Muri : WALL EST ESTERNO : WALL EST ESTERNO</span>
    <div class="mid">
      <svg class="i"><use href="#s-work"/></svg>
      <label class="combo flat"><select aria-label="Workset"><option></option></select><svg width="18" height="12"><use href="#chev"/></svg></label>
      <svg class="i"><use href="#s-filt"/></svg><span class="zero">:0</span>
      <svg class="i"><use href="#s-opt"/></svg><svg class="i"><use href="#s-add"/></svg>
      <label class="combo flat"><select aria-label="Opzione di progettazione"><option>Modello principale</option></select><svg width="18" height="12"><use href="#chev"/></svg></label>
    </div>
    <div class="tools"><svg class="i"><use href="#s-link"/></svg><svg class="i"><use href="#s-under"/></svg><svg class="i"><use href="#s-pin"/></svg><svg class="i"><use href="#s-face"/></svg><svg class="i"><use href="#s-drag"/></svg><svg class="i"><use href="#s-spin"/></svg><svg class="i"><use href="#s-funnel"/></svg><span>:1</span></div>
  </footer>
</div>
</body>
</html>
```

FILE: styles.css
```
:root {
  --bar: #ccc;
  --panel: #eee;
  --green: #e5efd7;
  --ink: #333;
}
* { box-sizing: border-box; }
html, body { margin: 0; height: 100%; background: #fff; }
body {
  padding: 31px 32px 33px 36px;
  font: 22px/30px "Open Sans", "Noto Sans", sans-serif;
  color: var(--ink);
}
button, select { font: inherit; color: inherit; border: 0; background: none; padding: 0; margin: 0; border-radius: 0; }
h2, h3 { font: inherit; margin: 0; }
ul { list-style: none; margin: 0; padding: 0; }
svg { display: block; flex: none; }
.defs { position: absolute; width: 0; height: 0; }
.i { width: 32px; height: 32px; color: #3a4350; }
.l { width: 60px; height: 62px; }
.caret { width: 12px; height: 8px; color: #555; }
.off { color: #aaa; }
.app { height: 100%; display: flex; flex-direction: column; overflow: hidden; }

/* ribbon tabs */
.menu { display: flex; flex: none; height: 40px; background: var(--bar); }
.menu button { padding: 0 20px; line-height: 38px; white-space: nowrap; }
.menu .file { width: 89px; margin-right: 2px; background: #2a7ab2; color: #fff; }
.menu .current { background: var(--green); color: #222; padding: 0 16px; margin: 0 0 0 8px; }
.menu .ribbon-toggle { display: flex; align-items: center; gap: 6px; margin-left: 24px; }

/* ribbon */
.ribbon { display: flex; flex: none; height: 186px; background: var(--green); padding: 2px 0; }
.panel { display: flex; flex-direction: column; flex: none; margin-left: 2px; background: var(--panel); }
.panel:first-child { margin-left: 0; }
.panel .body { flex: 1; display: flex; justify-content: center; min-height: 0; padding-top: 4px; }
.panel h2 { height: 36px; line-height: 34px; display: flex; gap: 10px; justify-content: center; align-items: center; }
.panel button { display: flex; align-items: center; justify-content: center; }
.tri { width: 16px; height: 12px; }
.big { flex-direction: column; }
.on { background: linear-gradient(#c3daf3, #aecff0); border: 2px solid #0a64c8; }
.col { display: grid; grid-template-rows: repeat(3, 47px); width: 49px; }
.col .caret { margin-left: 10px; }
.p-sel { width: 146px; }
.p-sel .big { width: 104px; height: 141px; justify-content: flex-start; gap: 18px; padding-top: 14px; }
.p-prop { width: 114px; }
.p-prop .body { flex-direction: column; align-items: center; gap: 4px; padding-top: 6px; }
.p-prop button { width: 75px; height: 66px; }
.p-clip { width: 168px; }
.p-clip .body { justify-content: flex-end; padding-right: 2px; }
.p-clip .big { width: 80px; gap: 8px; justify-content: flex-start; padding-top: 6px; margin-right: 18px; }
.p-clip .caret { color: #888; }
.p-geo { width: 293px; }
.p-geo .body { justify-content: flex-start; padding-left: 13px; }
.p-geo .wide { width: 155px; }
.p-geo .wide button { justify-content: flex-start; gap: 10px; }
.p-geo .wide .caret { margin-left: 4px; }
.arrows { width: 72px; }
.arrows button { justify-content: flex-start; padding-left: 8px; }
.p-mod { width: 464px; }
.large { display: grid; grid-template: 69px 69px / repeat(4, 77px); }
.p-view { width: 126px; }
.p-meas { width: 109px; }
.p-meas .body { flex-direction: column; align-items: center; }
.p-meas button { height: 69px; gap: 13px; }
.p-crea { width: 158px; }
.p-crea .body { display: grid; grid-template: 69px 69px / 74px 74px; }
.p-reb { width: 118px; margin-left: 8px; }
.p-reb .body { padding-bottom: 40px; }
.p-reb .big { gap: 12px; }
.p-reb h2 { background: var(--green); margin: 0 2px; }

/* quick access bar */
.qat { display: flex; flex: none; align-items: center; gap: 16px; height: 49px; padding: 2px 16px 0; background: var(--bar); }
.qat button { display: flex; align-items: center; }
.qat .caret { margin: 0 0 0 10px; }
.qat .caret.dark { color: #444; }
.qat .near { margin-left: -4px; }
.sep { width: 2px; height: 43px; margin: 0 -3px; background: #b8b8b8; }
.combo { position: relative; display: flex; align-items: center; }
.combo select { appearance: none; width: 100%; height: 100%; outline: 0; }
.combo svg { position: absolute; right: 8px; pointer-events: none; color: #444; }
.quick { width: 408px; height: 40px; margin-left: -6px; background: #efefef; }
.quick select { padding: 0 0 2px 7px; }
.quick svg { right: 2px; }
.options { flex: none; height: 51px; padding-left: 17px; line-height: 53px; background: var(--green); color: #111; }

/* work area */
.work { flex: 1; display: flex; min-height: 0; }
.side { flex: none; width: 654px; display: flex; flex-direction: column; padding-top: 4px; background: var(--panel); border-right: 3px solid var(--bar); box-shadow: inset 0 4px #ccc; }
.side header { display: flex; justify-content: space-between; align-items: center; height: 40px; padding: 2px 10px 0 4px; white-space: nowrap; color: #444; }
.props { flex: none; padding-left: 3px; }
.type { display: flex; align-items: center; width: 643px; height: 141px; padding: 3px; border: 2px solid #ccc; color: #444; }
.type .thumb { width: 130px; height: 130px; margin-right: 8px; border: 2px solid #ccc; }
.type svg { margin-left: auto; }
.filter { display: flex; align-items: center; height: 49px; gap: 12px; color: #000; }
.cat { width: 435px; height: 45px; background: #e1e1e1; border: 2px solid #adadad; }
.cat select { padding-left: 7px; }
.edit { display: flex; align-items: center; gap: 10px; padding-bottom: 4px; }
.grid { width: 643px; height: 518px; background: #fff; color: #000; }
.grid table { width: 100%; border-collapse: separate; border-spacing: 0; table-layout: fixed; }
.c-name { width: 310px; }
.c-btn { width: 26px; }
.grid th, .grid td { height: 35px; padding: 0 0 3px; font-weight: 400; text-align: left; line-height: 28px; white-space: nowrap; border-bottom: 2px dotted #888; vertical-align: middle; }
.grid th { padding-left: 16px; }
.grid td { padding-left: 5px; border-left: 2px dotted #888; }
.grid td:last-child { padding: 0 0 0 1px; border-right: 2px dotted #888; }
.grid .cat-row th, .grid .cat-row td { height: 36px; padding-left: 4px; background: #dcdcdc; border: 0; }
.grid .cat-row td { padding-left: 0; }
.up { width: 12px; height: 18px; }
.grid td.active { border: 2px solid #000; padding: 0 4px; }
.grid input { appearance: none; display: block; width: 25px; height: 25px; margin: 4px 0 0; border: 2px solid #333; background: #fff; }
.assoc { display: block; width: 20px; height: 30px; background: #e1e1e1; border: 2px solid #adadad; }
.props footer { display: flex; justify-content: space-between; align-items: center; height: 56px; padding: 0 9px 2px 4px; }
.props a { color: #0a64c8; text-decoration: underline; text-underline-offset: 3px; }
.props footer button { width: 143px; height: 42px; background: var(--bar); border: 2px solid #bfbfbf; color: #838383; }

.browser { flex: 1; min-height: 0; display: flex; flex-direction: column; border-top: 3px solid var(--bar); padding: 0 5px 4px 3px; }
.browser header { flex: none; margin-right: -5px; }
.treebox { flex: 1; min-height: 0; display: flex; background: #fff; overflow: hidden; }
.tree { flex: 1; padding-left: 8px; color: #000; }
.tree ul { padding-top: 1px; margin-left: 39px; }
.tree li { position: relative; }
.tree li::before { content: ""; position: absolute; left: 7px; top: 0; bottom: 0; border-left: 2px dotted #aaa; }
.tree li:last-child:not(.more)::before { bottom: auto; height: 19px; }
.tree > li:first-child::before { top: 19px; }
.row { position: relative; display: flex; align-items: center; height: 35px; padding: 0 0 3px 43px; white-space: nowrap; }
.row::before { content: ""; position: absolute; left: 8px; top: 18px; width: 28px; border-top: 2px dotted #aaa; }
.tree > li > .row { padding-left: 31px; }
.tree > li > .row::before { width: 22px; }
.tree > li > .row span { margin-left: 5px; padding: 3px 7px; }
.tree .sel { background: #e3e3e3; }
.ex { position: absolute; left: 0; top: 10px; width: 17px; height: 18px; border: 2px solid #919191; border-radius: 3px; background: linear-gradient(#fff, #e4e4e4); }
.ex::before, .ex.plus::after { content: ""; position: absolute; left: 2px; top: 6px; width: 9px; height: 2px; background: #3a56a4; }
.ex.plus::after { left: 6px; top: 2px; width: 2px; height: 10px; }

.vbar { flex: none; width: 29px; display: flex; flex-direction: column; align-items: center; padding: 11px 0; background: #f0f0f0; }
.vbar .knob { width: 100%; height: 108px; margin-top: 8px; background: var(--bar); }
.flip { transform: rotate(180deg); margin-top: auto; }
.vbar.wide { width: 32px; margin-top: 4px; }
.vbar.wide .knob { height: 34px; margin: auto 0; }
.vbar.wide .flip { margin-top: 0; }

/* drawing area */
.viewport { flex: 1; min-width: 0; display: flex; flex-direction: column; }
.tabs { flex: none; display: flex; align-items: flex-end; height: 43px; background: var(--bar); }
.tabs button { width: 251px; height: 38px; padding: 2px 9px 0; display: flex; align-items: center; gap: 15px; font-size: 22px; }
.tabs .i { color: #888; width: 30px; height: 30px; }
.tabs .current { background: #fff; font-weight: 600; }
.tabs .current .i { color: #3a4350; }
.tabs .close { margin-left: auto; }
.tabmenu { margin: 0 8px 10px auto; color: #333; }
.stage { flex: 1; min-height: 0; display: flex; }
.canvas { flex: 1; min-width: 0; position: relative; padding-top: 4px; overflow: hidden; }
.scene { width: 100%; height: auto; }
.cube { position: absolute; right: 50px; top: 107px; }
.facetext { font-size: 18px; fill: #8c9096; text-anchor: middle; }
.navbar { position: absolute; right: 2px; top: 340px; }
.tip { position: absolute; left: 1293px; top: 840px; padding: 2px 13px; border: 2px solid #767676; background: #fff; color: #575757; box-shadow: 6px 6px 4px #0006; white-space: nowrap; }
.viewctl { flex: none; display: flex; align-items: center; height: 33px; margin: 0 0 4px 4px; background: #f0f0f0; }
.scale { width: 155px; padding-left: 6px; font: 22px/30px "DejaVu Sans Mono", monospace; color: #000; }
.ctl { display: flex; gap: 9px; }
.left { transform: rotate(-90deg); margin-left: 16px; }
.hbar { flex: 1; height: 30px; padding-left: 1134px; }
.hknob { display: block; width: 33px; height: 30px; background: var(--bar); }
.right { transform: rotate(90deg); margin-right: 18px; }
.grip { margin-right: 6px; }

/* status bar */
.status { flex: none; display: flex; height: 38px; background: var(--bar); overflow: hidden; }
.msg { width: 1670px; padding-left: 2px; line-height: 46px; color: #111; }
.mid { display: flex; align-items: flex-start; padding-top: 9px; }
.flat { width: 405px; height: 40px; margin-left: 14px; background: #fff; border: 2px solid #eee; color: #888; }
.flat select { padding: 0 4px 10px; }
.flat svg { right: 6px; color: #aaa; top: 12px; }
.flat + .i { margin-left: 14px; }
.zero { width: 74px; padding-left: 8px; color: #000; }
.mid > .i + .i { margin-left: 18px; }
.tools { display: flex; margin-left: auto; padding: 9px 138px 0 0; gap: 19px; }
.tools span { margin-left: -14px; color: #435; }
```
